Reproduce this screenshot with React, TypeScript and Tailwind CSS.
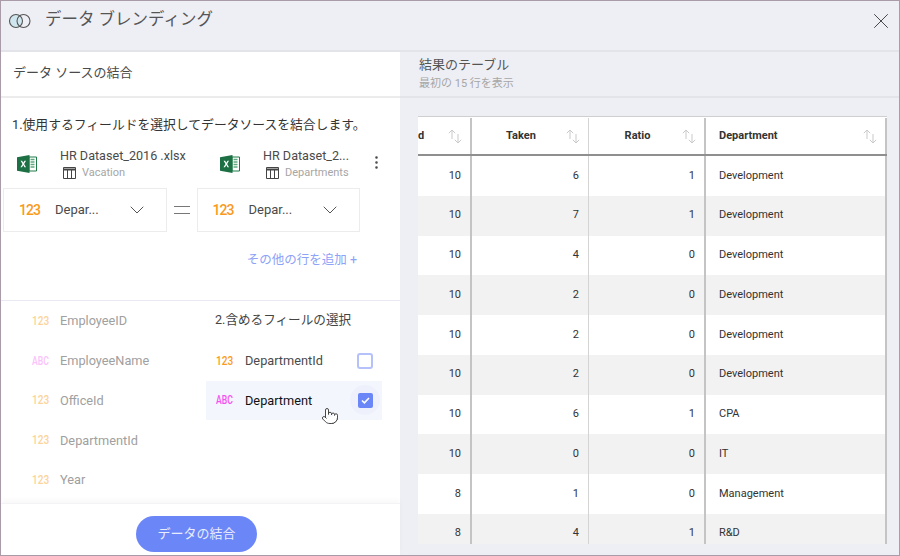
import { ChevronDown, EllipsisVertical, Pointer, X } from 'lucide-react';

const rows = [
  ['10', '6', '1', 'Development'],
  ['10', '7', '1', 'Development'],
  ['10', '4', '0', 'Development'],
  ['10', '2', '0', 'Development'],
  ['10', '2', '0', 'Development'],
  ['10', '2', '0', 'Development'],
  ['10', '6', '1', 'CPA'],
  ['10', '0', '0', 'IT'],
  ['8', '1', '0', 'Management'],
  ['8', '4', '1', 'R&D'],
];

const fields = [
  { type: '123', name: 'EmployeeID' },
  { type: 'ABC', name: 'EmployeeName' },
  { type: '123', name: 'OfficeId' },
  { type: '123', name: 'DepartmentId' },
  { type: '123', name: 'Year' },
];

function BlendIcon() {
  return (
    <svg width="24" height="16" viewBox="0 0 24 16" fill="none">
      <circle cx="8" cy="8" r="6.5" fill="#cfe6ee" stroke="#555" strokeWidth="1.1" />
      <circle cx="15.5" cy="8" r="6.5" stroke="#555" strokeWidth="1.1" />
    </svg>
  );
}

function ExcelIcon() {
  return (
    <svg width="20" height="18" viewBox="0 0 20 18">
      <path d="M12 2h7.5v14H12z" fill="#fff" stroke="#1f7a47" strokeWidth="1" />
      <path d="M13.5 4.5h4M13.5 7h4M13.5 9.5h4M13.5 12h4" stroke="#5fa97f" strokeWidth="1.4" />
      <path d="M0 2.2 12.5 0v18L0 15.8z" fill="#1d7044" />
      <path d="M3.6 5.8h1.5l1.2 2 1.2-2H9L7.1 9 9 12.2H7.5L6.3 10.1 5 12.2H3.5L5.5 9z" fill="#fff" />
    </svg>
  );
}

function TableIcon() {
  return (
    <svg width="13" height="12" viewBox="0 0 13 12" fill="none" stroke="#444" strokeWidth="1">
      <path d="M.5.5h12v11H.5z" />
      <path d="M.5 2.5h12" strokeWidth="2" />
      <path d="M4.5 3v8.5M8.5 3v8.5" />
    </svg>
  );
}

function SortIcon() {
  return (
    <svg width="14" height="15" viewBox="0 0 14 15" fill="none" stroke="#c9c9c9" strokeWidth="1">
      <path d="M4 10V1M.8 4.2 4 1l3.2 3.2" />
      <path d="M10 5v9M6.8 10.8 10 14l3.2-3.2" />
    </svg>
  );
}

function TypeTag({ type, faded }: { type: string; faded?: boolean }) {
  const color =
    type === '123'
      ? faded
        ? 'text-[#fbd39a] scale-x-[0.84]'
        : 'text-[#f99a1c] scale-x-[0.84]'
      : faded
        ? 'text-[#fbc2fb] scale-x-[0.72]'
        : 'text-[#f451f0] scale-x-[0.72]';
  return (
    <span className={`w-[18px] shrink-0 origin-left text-[12px] font-medium whitespace-nowrap ${color}`}>
      {type}
    </span>
  );
}

function SourceHeader({ name, table, nameWidth }: { name: string; table: string; nameWidth: string }) {
  return (
    <div className="flex items-center pl-[16px] gap-[23px]">
      <ExcelIcon />
      <div className={nameWidth}>
        <div className="text-[12.6px] leading-[17px] whitespace-nowrap text-[#4a4a4a]">{name}</div>
        <div className="mt-[1px] flex items-center pl-[3px] gap-[6px] text-[11px] leading-[16px] text-[#a6a6a6]">
          <TableIcon />
          {table}
        </div>
      </div>
    </div>
  );
}

function FieldSelect() {
  return (
    <div className="w-[163.5px] h-[44px] border border-[#ececec] flex items-center pl-[15px] pr-[17px]">
      <span className="text-[14px] font-medium tracking-[-1px] text-[#f99a1c] w-[36px]">123</span>
      <span className="text-[13px] text-[#4a4a4a] flex-1">Depar...</span>
      <ChevronDown size={24} strokeWidth={1} className="text-[#555]" />
    </div>
  );
}

function HeaderCell({ label, className }: { label: string; className: string }) {
  return (
    <div className={`flex items-center pl-[4px] pr-[8px] ${className}`}>
      <span className="flex-1 text-center text-[11px] font-bold text-[#333]">{label}</span>
      <SortIcon />
    </div>
  );
}

export default function App() {
  return (
    <div className="w-[900px] h-[556px] overflow-hidden border border-[#a99ca8] flex flex-col bg-[#eeeff5] font-['Roboto','Noto_Sans_CJK_JP',sans-serif]">
      {/* Title bar */}
      <header className="h-[51px] shrink-0 border-b-2 border-[#e3e4ea] flex items-center pl-[7px] pr-[5px] pb-[10px]">
        <BlendIcon />
        <h1 className="ml-[13px] text-[16.5px] text-[#555]">データ ブレンディング</h1>
        <X size={26} strokeWidth={0.9} className="ml-auto text-[#444]" />
      </header>

      <div className="flex-1 flex min-h-0">
        {/* Left panel */}
        <div className="w-[399px] shrink-0 bg-white flex flex-col">
          <div className="h-[46px] shrink-0 border-b-2 border-[#ececec] flex items-center pl-[12px] pb-[2px] text-[13px] text-[#4a4a4a]">
            データ ソースの結合
          </div>

          <div className="h-[203px] shrink-0 border-b border-[#e9e9f2] flex flex-col">
            <p className="mt-[17px] ml-[11px] text-[12.8px] leading-[20px] text-[#333]">
              1.使用するフィールドを選択してデータソースを結合します。
            </p>
            <div className="mt-[12px] flex items-center">
              <div className="w-[203px]">
                <SourceHeader name="HR Dataset_2016 .xlsx" table="Vacation" nameWidth="w-[140px]" />
              </div>
              <SourceHeader name="HR Dataset_2..." table="Departments" nameWidth="w-[105px]" />
              <EllipsisVertical size={17} strokeWidth={1.6} className="mb-[3px] text-[#444]" />
            </div>
            <div className="mt-[7px] ml-[2px] flex items-center">
              <FieldSelect />
              <div className="w-[30px] flex justify-center">
                <div className="w-[16px] h-[8px] border-y border-[#777]" />
              </div>
              <FieldSelect />
            </div>
            <div className="mt-[18px] pr-[43px] text-right text-[12.5px] leading-[20px] text-[#8ea2f7]">
              その他の行を追加 +
            </div>
          </div>

          <div className="flex-1 min-h-0 flex">
            <div className="w-[205px] shrink-0">
              {fields.map((f) => (
                <div key={f.name} className="h-[39.75px] flex items-center pl-[31px] gap-[10px] text-[12.75px] text-[#a0a0a0]">
                  <TypeTag type={f.type} faded />
                  {f.name}
                </div>
              ))}
            </div>
            <div className="w-[176px]">
              <div className="h-[39.75px] flex items-center pl-[9px] pb-[1px] text-[12.6px] text-[#444]">2.含めるフィールの選択</div>
              <div className="h-[40px] flex items-center pl-[10px] gap-[11px] text-[12.75px] text-[#4a4a4a]">
                <TypeTag type="123" />
                DepartmentId
                <div className="ml-auto mr-[9px] w-[16px] h-[16px] rounded-[3px] border-2 border-[#b4c1fa] bg-white" />
              </div>
              <div className="relative h-[39px] flex items-center pl-[10px] gap-[11px] text-[12.75px] text-[#111] bg-[#f4f6fe]">
                <TypeTag type="ABC" />
                Department
                <div className="ml-auto mr-[2px] w-[30px] h-[30px] rounded-full bg-[#eef0fb] flex items-center justify-center">
                  <div className="w-[15px] h-[15px] rounded-[2px] bg-[#6b86f7] flex items-center justify-center">
                    <svg width="9" height="7" viewBox="0 0 9 7" fill="none" stroke="#fff" strokeWidth="1.6">
                      <path d="M1 3.5 3.4 5.8 8 1" />
                    </svg>
                  </div>
                </div>
                <Pointer size={18} strokeWidth={1.2} className="absolute left-[115px] top-[26px] fill-white text-[#333]" />
              </div>
            </div>
          </div>

          <div className="h-[52px] shrink-0 border-t border-[#f3f3f6] shadow-[0_-3px_5px_rgba(0,0,0,0.03)] flex justify-center pt-[12px] pr-[8px]">
            <button className="w-[121px] h-[36px] rounded-full bg-[#6b86f7] text-[13px] text-[#e8ecff]">データの結合</button>
          </div>
        </div>

        {/* Result panel */}
        <div className="flex-1 min-w-0 flex flex-col">
          <div className="h-[46px] shrink-0 border-b-2 border-[#e3e4ea] pl-[19px] pt-[3px]">
            <div className="text-[13px] leading-[20px] text-[#555]">結果のテーブル</div>
            <div className="mt-[1px] text-[11px] leading-[16px] text-[#a6a6a6]">最初の 15 行を表示</div>
          </div>

          <div className="ml-[18px] mt-[18px] w-[469px] h-[428px] overflow-hidden bg-white text-[11px] text-[#333]">
            <div className="h-[40px] flex pt-[1px] border-t border-[#cfcfcf] border-b-2 border-b-[#8f8f8f]">
              <div className="w-[54px] border-r-2 border-[#c4c4c4] flex items-center justify-between pr-[8px]">
                <span className="font-bold">d</span>
                <SortIcon />
              </div>
              <HeaderCell label="Taken" className="w-[117px] border-r border-[#d4d4d4]" />
              <HeaderCell label="Ratio" className="w-[117px] border-r-2 border-[#c4c4c4]" />
              <div className="flex-1 flex items-center pl-[13px] pr-[8px] border-r-2 border-[#c4c4c4]">
                <span className="flex-1 font-bold">Department</span>
                <SortIcon />
              </div>
            </div>
            {rows.map((r, i) => (
              <div key={i} className={`h-[39.75px] flex ${i % 2 === 1 ? 'bg-[#f2f2f2]' : 'bg-white'}`}>
                <div className="w-[54px] border-r-2 border-[#c4c4c4] flex items-center justify-end pr-[9px]">{r[0]}</div>
                <div className="w-[117px] border-r border-[#d4d4d4] flex items-center justify-end pr-[9px]">{r[1]}</div>
                <div className="w-[117px] border-r-2 border-[#c4c4c4] flex items-center justify-end pr-[9px]">{r[2]}</div>
                <div className="flex-1 border-r-2 border-[#c4c4c4] flex items-center pl-[13px]">{r[3]}</div>
              </div>
            ))}
          </div>
        </div>
      </div>
    </div>
  );
}
